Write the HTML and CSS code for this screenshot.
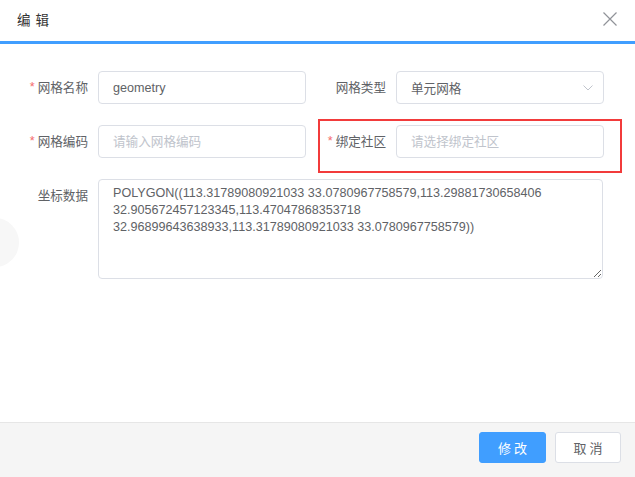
FILE: index.html
```html
<!DOCTYPE html>
<html lang="zh-CN">
<head>
<meta charset="utf-8">
<title>编辑</title>
<link rel="stylesheet" href="styles.css">
</head>
<body>
<div class="dialog">
  <header class="dlg-head">
    <span class="dlg-title">编 辑</span>
    <button class="dlg-close" type="button" aria-label="关闭">
      <svg width="14" height="14" viewBox="0 0 14 14"><path d="M0.5 0.5 L13.5 13.5 M13.5 0.5 L0.5 13.5" stroke="#909399" stroke-width="1.2" fill="none"/></svg>
    </button>
  </header>
  <main class="dlg-body">
    <div class="side-dot"></div>
    <form class="form">
      <div class="row">
        <div class="item">
          <label class="lbl"><span class="req">*</span>网格名称</label>
          <input class="inp" type="text" value="geometry">
        </div>
        <div class="item">
          <label class="lbl">网格类型</label>
          <div class="select">
            <input class="inp" type="text" value="单元网格" readonly>
            <svg class="arrow" width="10" height="6" viewBox="0 0 10 6"><path d="M0.5 0.5 L5 5 L9.5 0.5" stroke="#c0c4cc" stroke-width="1" fill="none"/></svg>
          </div>
        </div>
      </div>
      <div class="row">
        <div class="item">
          <label class="lbl"><span class="req">*</span>网格编码</label>
          <input class="inp" type="text" placeholder="请输入网格编码">
        </div>
        <div class="item">
          <label class="lbl"><span class="req">*</span>绑定社区</label>
          <input class="inp" type="text" placeholder="请选择绑定社区">
          <div class="mark"></div>
        </div>
      </div>
      <div class="row single">
        <div class="item wide">
          <label class="lbl">坐标数据</label>
          <textarea class="area">POLYGON((113.31789080921033 33.0780967758579,113.29881730658406 32.905672457123345,113.47047868353718 32.96899643638933,113.31789080921033 33.0780967758579))</textarea>
        </div>
      </div>
    </form>
  </main>
  <footer class="dlg-foot">
    <button class="btn primary" type="button">修 改</button>
    <button class="btn" type="button">取 消</button>
  </footer>
</div>
</body>
</html>
```
FILE: styles.css
```css
* { box-sizing: border-box; }
html, body { margin: 0; padding: 0; background: #fff; }
body {
  font-family: "Liberation Sans", "Noto Sans CJK SC", sans-serif;
  width: 635px;
  height: 477px;
  overflow: hidden;
}
.dialog {
  display: flex;
  flex-direction: column;
  height: 477px;
}
.dlg-head {
  height: 44px;
  border-bottom: 3px solid #409eff;
  display: flex;
  align-items: center;
  justify-content: space-between;
  padding: 0 18px 3px 17px;
}
.dlg-title {
  font-size: 13.5px;
  color: #333;
  font-family: "Noto Sans CJK SC", sans-serif;
  word-spacing: 2px;
}
.dlg-close {
  border: 0;
  background: none;
  padding: 0;
  width: 14px;
  height: 14px;
  display: flex;
}
.dlg-body {
  flex: 1;
  position: relative;
  padding: 27px 32px 0 28px;
  overflow: hidden;
}
.side-dot {
  position: absolute;
  left: -29px;
  top: 174px;
  width: 48px;
  height: 49px;
  border-radius: 50%;
  background: #f7f7f7;
}
.form { position: relative; }
.row {
  display: grid;
  grid-template-columns: 278px 278px;
  column-gap: 20px;
  margin-bottom: 21px;
  height: 33px;
}
.row.single { grid-template-columns: 1fr; height: auto; }
.item {
  display: flex;
  align-items: flex-start;
  position: relative;
}
.lbl {
  width: 70px;
  height: 33px;
  flex: none;
  display: flex;
  align-items: center;
  justify-content: flex-end;
  padding-right: 10px;
  font-size: 12.6px;
  line-height: 1;
  color: #606266;
  font-family: "Noto Sans CJK SC", sans-serif;
  white-space: nowrap;
}
.req {
  color: #f56c6c;
  margin-right: 3px;
  font-family: "Liberation Sans", sans-serif;
}
.inp {
  flex: 1;
  min-width: 0;
  width: 100%;
  height: 33px;
  border: 1px solid #dcdfe6;
  border-radius: 4px;
  padding: 0 14px;
  font-size: 12.6px;
  color: #606266;
  font-family: "Liberation Sans", "Noto Sans CJK SC", sans-serif;
  background: #fff;
  outline: none;
}
.inp::placeholder { color: #c0c4cc; }
.select {
  flex: 1;
  position: relative;
  display: flex;
}
.select .arrow {
  position: absolute;
  right: 11px;
  top: 14px;
}
.mark {
  position: absolute;
  left: -8px;
  top: -6px;
  width: 304px;
  height: 54px;
  border: 2px solid #f23b3b;
  pointer-events: none;
}
.area {
  flex: 1;
  height: 100px;
  border: 1px solid #dcdfe6;
  border-radius: 4px;
  padding: 5px 14px;
  font-size: 12.6px;
  line-height: 17px;
  color: #606266;
  font-family: "Liberation Sans", "Noto Sans CJK SC", sans-serif;
  outline: none;
  resize: vertical;
}
.dlg-foot {
  height: 55px;
  background: #f5f5f5;
  border-top: 1px solid #e6e6e6;
  display: flex;
  justify-content: flex-end;
  align-items: flex-start;
  gap: 9px;
  padding: 9px 14px 0 0;
}
.btn {
  width: 66px;
  height: 31px;
  border: 1px solid #dcdfe6;
  border-radius: 3px;
  background: #fff;
  color: #606266;
  font-size: 13px;
  font-family: "Noto Sans CJK SC", sans-serif;
  padding: 0;
}
.btn.primary {
  width: 67px;
  background: #409eff;
  border-color: #409eff;
  color: #fff;
}
```
